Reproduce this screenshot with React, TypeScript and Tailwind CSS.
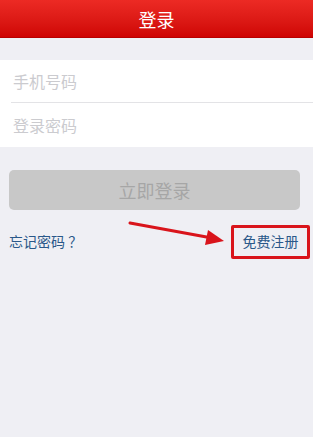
import React from "react";

const FONT = {fontFamily: '"Noto Sans CJK SC", "Noto Sans", sans-serif'};

export default function App() {
  return (
    <div className="w-[313px] h-[437px] bg-[#efeff4] flex flex-col overflow-hidden" style={FONT}>
      <div className="h-[38px] bg-gradient-to-b from-[#ec2a24] to-[#cf0303] border-b border-[#b80000] flex items-center justify-center">
        <span className="text-white text-[18px] leading-none">登录</span>
      </div>

      <div className="mt-[22px] bg-white flex flex-col">
        <div className="h-[43px] ml-[11px] border-b border-[#e3e3e6] flex items-center">
          <span className="ml-[2px] text-[16px] text-[#cbcbcf]">手机号码</span>
        </div>
        <div className="h-[44px] ml-[11px] flex items-center">
          <span className="ml-[2px] text-[16px] text-[#cbcbcf]">登录密码</span>
        </div>
      </div>

      <div className="ml-[9px] mr-[13px] mt-[23px] h-[40px] rounded-[5px] bg-[#c8c8c8] flex items-center justify-center">
        <span className="text-[18px] text-[#a6a6a6]">立即登录</span>
      </div>

      <div className="relative mt-[14px] h-[35px] flex items-center justify-between pl-[9px] pr-[3px]">
        <span className="text-[14px] text-[#2a5889]">忘记密码 ？</span>
        <div className="h-[34px] w-[79px] border-[3px] border-[#d9141b] rounded-[2px] flex items-center justify-center">
          <span className="text-[14px] text-[#2a5889]">免费注册</span>
        </div>
        <svg className="absolute left-[128px] top-[-3px]" width="100" height="26" viewBox="0 0 100 26">
          <line x1="2" y1="2" x2="84" y2="17" stroke="#d9141b" strokeWidth="3" strokeLinecap="round" />
          <polygon points="96,20 80,9 77,24" fill="#d9141b" />
        </svg>
      </div>
    </div>
  );
}
